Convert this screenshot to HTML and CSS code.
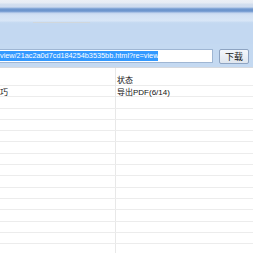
FILE: index.html
```html
<!DOCTYPE html>
<html>
<head>
<meta charset="utf-8">
<link rel="stylesheet" href="styles.css">
</head>
<body>
<div class="top">
  <div class="ribbon">
    <div class="tabline"></div>
  </div>
  <div class="addr">
    <div class="input"><span class="sel">view/21ac2a0d7cd184254b3535bb.html?re=view</span></div>
    <div class="btn">下载</div>
  </div>
</div>
<div class="grid">
  <div class="row head"><div class="c1"></div><div class="c2">状态</div></div>
  <div class="row"><div class="c1">巧</div><div class="c2">导出PDF(6/14)</div></div>
  <div class="row"><div class="c1"></div><div class="c2"></div></div>
  <div class="row"><div class="c1"></div><div class="c2"></div></div>
  <div class="row"><div class="c1"></div><div class="c2"></div></div>
  <div class="row"><div class="c1"></div><div class="c2"></div></div>
  <div class="row"><div class="c1"></div><div class="c2"></div></div>
  <div class="row"><div class="c1"></div><div class="c2"></div></div>
  <div class="row"><div class="c1"></div><div class="c2"></div></div>
  <div class="row"><div class="c1"></div><div class="c2"></div></div>
  <div class="row"><div class="c1"></div><div class="c2"></div></div>
  <div class="row"><div class="c1"></div><div class="c2"></div></div>
  <div class="row"><div class="c1"></div><div class="c2"></div></div>
  <div class="row"><div class="c1"></div><div class="c2"></div></div>
  <div class="row"><div class="c1"></div><div class="c2"></div></div>
  <div class="row"><div class="c1"></div><div class="c2"></div></div>
</div>
</body>
</html>
```

FILE: styles.css
```css
html, body {
  margin: 0;
  padding: 0;
  background: #ffffff;
  overflow: hidden;
  width: 253px;
  height: 253px;
}
body {
  font-family: "Liberation Sans", "Noto Sans CJK SC", sans-serif;
  font-size: 8px;
  color: #111111;
}
.top {
  height: 68px;
  background: #c4d9f1;
  border-bottom: 1px solid #d6d9de;
  box-sizing: border-box;
  display: flex;
  flex-direction: column;
}
.ribbon {
  height: 45px;
  background: linear-gradient(to bottom,
    #ebeff5 0px, #e6ecf4 3px, #d3dfef 4px, #cddbee 7px,
    #9bb8df 8px, #7098cf 9px, #6b94cc 11px, #8cacdb 12px,
    #c3d5ee 13px, #d2e1f4 15px, #d8e6f7 21px, #c8dbf2 22px,
    #c3d8f1 24px, #c3d8f1 45px);
  position: relative;
}
.tabline {
  position: absolute;
  left: 33px;
  top: 22px;
  width: 57px;
  height: 1px;
  background: #d6d6d2;
  opacity: 0.7;
}
.addr {
  height: 23px;
  display: flex;
  align-items: flex-start;
  padding-top: 5px;
  box-sizing: border-box;
  gap: 6px;
}
.input {
  width: 215px;
  height: 14px;
  margin-left: -2px;
  box-sizing: border-box;
  background: #ffffff;
  border: 1px solid #9fb6d3;
  border-left: none;
  display: flex;
  align-items: center;
  overflow: hidden;
  white-space: nowrap;
}
.sel {
  background: #3399ff;
  color: #ffffff;
  font-family: "Liberation Sans", sans-serif;
  font-size: 7.3px;
  line-height: 10px;
  padding-left: 2px;
}
.btn {
  width: 30px;
  height: 15px;
  box-sizing: border-box;
  border: 1px solid #8ea4c2;
  border-radius: 2px;
  background: linear-gradient(to bottom, #f4f7fb, #dfe6ef);
  font-family: "Noto Sans CJK SC", sans-serif;
  font-size: 9px;
  line-height: 13px;
  text-align: center;
  color: #222;
}
.grid {
  display: flex;
  flex-direction: column;
}
.row {
  display: grid;
  grid-template-columns: 116px 1fr;
  height: 11.3px;
  box-sizing: border-box;
  border-bottom: 1.3px solid #ececec;
  line-height: 13px;
}
.row.head {
  height: 18px;
  line-height: 25px;
}
.c1 {
  border-right: 1px solid #e8e8e8;
  white-space: nowrap;
}
.c2 {
  padding-left: 1px;
  white-space: nowrap;
}
```
